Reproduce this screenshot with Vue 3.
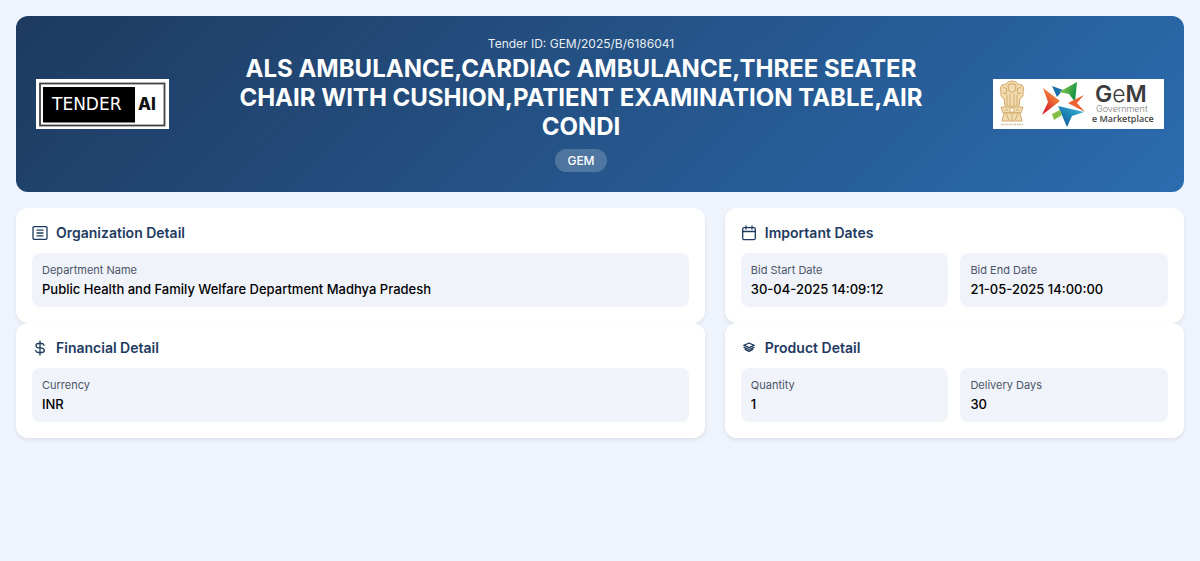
<script setup>
const columns = [
  [
    { title: 'Organization Detail', icon: 'list', items: [['Department Name', 'Public Health and Family Welfare Department Madhya Pradesh']] },
    { title: 'Financial Detail', icon: 'dollar', items: [['Currency', 'INR']] }
  ],
  [
    { title: 'Important Dates', icon: 'calendar', items: [['Bid Start Date', '30-04-2025 14:09:12'], ['Bid End Date', '21-05-2025 14:00:00']] },
    { title: 'Product Detail', icon: 'layers', items: [['Quantity', '1'], ['Delivery Days', '30']] }
  ]
]
</script>

<template>
  <main class="page">
    <header class="banner">
      <svg class="logo" width="133" height="50" viewBox="0 0 133 50" role="img" aria-label="Tender AI">
        <rect x="4" y="4.5" width="124.5" height="42" fill="#fff" stroke="#45403d" stroke-width="1.8" />
        <rect x="7" y="8" width="92" height="35.5" fill="#000" />
        <text x="16" y="31" class="word-tender">TENDER</text>
        <text x="102" y="31" class="word-ai">AI</text>
      </svg>
      <div class="heading">
        <p class="tender-id">Tender ID: GEM/2025/B/6186041</p>
        <h1>ALS AMBULANCE,CARDIAC AMBULANCE,THREE SEATER CHAIR WITH CUSHION,PATIENT EXAMINATION TABLE,AIR CONDI</h1>
        <span class="badge">GEM</span>
      </div>
      <svg class="logo" width="171" height="50" viewBox="0 0 171 50" role="img" aria-label="GeM Government e Marketplace">
        <defs>
          <linearGradient id="flame" x1="0" y1="1" x2="0.6" y2="0">
            <stop offset="0.2" stop-color="#d9232e" />
            <stop offset="1" stop-color="#f79a3c" />
          </linearGradient>
          <linearGradient id="leaf" x1="0" y1="0" x2="1" y2="0.4">
            <stop offset="0" stop-color="#a4cf45" />
            <stop offset="1" stop-color="#159447" />
          </linearGradient>
          <linearGradient id="wave" x1="0" y1="1" x2="1" y2="0">
            <stop offset="0.2" stop-color="#15649f" />
            <stop offset="1" stop-color="#35bfe0" />
          </linearGradient>
        </defs>
        <g fill="#f1dcb2" stroke="#cfa45e" stroke-width="0.9" stroke-linejoin="round">
          <path d="M13 5Q15 2 19 2Q23 2 25 5L29 6Q32 9 30 13L30 17L27 20L26 27H12L11 20L8 17L8 13Q6 9 9 6Z" />
          <path d="M8 28H30L28 34H10Z" />
          <path d="M11 34H27L29 42H9Z" />
          <path d="M15 6Q19 3 23 6L22 12Q19 15 16 12ZM10 8L14 10L13 15L10 14M28 8L24 10L25 15L28 14M14 16V26M17 15V26M21 15V26M24 16V26" fill="none" />
          <circle cx="19" cy="31" r="2.4" fill="#fff6e2" />
          <path d="M12 31H15M23 31H26M13 35L16 41M19 35V42M25 35L22 41" fill="none" />
        </g>
        <path d="M8 45.5H30" stroke="#d9c6a4" stroke-width="1.5" stroke-dasharray="2 0.6" />
        <path d="M50 9L67 22L49 36L55 23Z" fill="url(#flame)" />
        <path d="M59 7L70 11L64 18Z" fill="#1b70ac" />
        <path d="M84 3L82 23L76 15L66 13Z" fill="url(#leaf)" />
        <path d="M91 16L84 24L92 33L75 24Z" fill="#ee6332" />
        <path d="M65 27L91 33L79 37L74 48Z" fill="url(#wave)" />
        <path d="M59 35L67 31L69 36L61 41Z" fill="#86bf49" />
        <text x="102" y="23" class="gem"><tspan>G</tspan><tspan class="thin">e</tspan><tspan>M</tspan></text>
        <text x="103" y="33" class="gov">Government</text>
        <text x="99" y="43" class="market">e Marketplace</text>
      </svg>
    </header>

    <div class="columns">
      <div v-for="(cards, i) in columns" :key="i">
        <section v-for="card in cards" :key="card.title" class="card">
          <h2>
            <svg width="16" height="16" viewBox="0 0 16 16" class="icon" aria-hidden="true">
              <g v-if="card.icon === 'list'">
                <rect x="1" y="1.7" width="14" height="12.6" rx="1" />
                <path d="M5 5.2H11M5 8H11M5 10.8H11" />
              </g>
              <path v-else-if="card.icon === 'dollar'" d="M8 1V15M12 5.3Q11.5 3.5 9.5 3.5H6.5Q4 3.5 4 5.6Q4 7.7 6.5 7.9L9.5 8.2Q12.3 8.5 12.3 10.5Q12.3 12.5 9.5 12.5H6.5Q4 12.5 3.6 10.7" />
              <g v-else-if="card.icon === 'calendar'">
                <rect x="1.7" y="2.7" width="12.6" height="12" rx="1.5" />
                <path d="M1.7 6.5H14.3M5 1V4M11 1V4" />
              </g>
              <path v-else d="M8 3L13.2 5.3L8 7.6L2.8 5.3ZM4.2 7.6V9.3L8 11.3L11.8 9.3V7.6M3 7.5L8 9.5L13 7.5" />
            </svg>
            {{ card.title }}
          </h2>
          <dl>
            <div v-for="item in card.items" :key="item[0]" class="item">
              <dt>{{ item[0] }}</dt>
              <dd>{{ item[1] }}</dd>
            </div>
          </dl>
        </section>
      </div>
    </div>
  </main>
</template>

<style>
body { background: #eff3fb; }
</style>

<style scoped>
.page { padding: 16px; font-family: Inter, "Liberation Sans", sans-serif; color: #000; }
.banner {
  display: flex; align-items: center; justify-content: space-between;
  padding: 20px; border-radius: 12px; margin-bottom: 16px; color: #fff;
  background: linear-gradient(135deg, #1e3a5f 0%, #2b6cb0 100%);
}
.logo { flex: none; display: block; background: #fff; }
.heading { max-width: 700px; text-align: center; }
.tender-id { margin: 0 0 3px; font-size: 12px; line-height: 15px; opacity: 0.9; }
h1 { margin: 0 0 8px; font-size: 24px; line-height: 29px; font-weight: 700; }
.badge {
  display: block; width: fit-content; margin: 0 auto; padding: 4px 12px; border-radius: 12px;
  font-size: 12px; line-height: 15px; font-weight: 500; background: rgba(255, 255, 255, 0.2);
}
.columns { display: grid; grid-template-columns: 3fr 2fr; gap: 20px; }
.card { padding: 16px; border-radius: 12px; background: #fff; box-shadow: 0 2px 4px rgba(0, 0, 0, 0.08); }
h2 {
  display: flex; align-items: center; gap: 8px; margin: 0 0 12px;
  font-size: 14px; line-height: 17px; font-weight: 600; color: #1e3a5f;
}
.icon { fill: none; stroke: currentColor; stroke-width: 1.3; stroke-linecap: round; stroke-linejoin: round; }
dl { display: flex; gap: 12px; margin: 0; }
.item { flex: 1; padding: 10px; border-radius: 8px; background: #f0f3f9; }
dt { margin-bottom: 4px; font-size: 11px; line-height: 14px; color: #4a5568; }
dd { margin: 0; font-size: 13px; line-height: 16px; font-weight: 500; }
.word-tender { font-family: "DejaVu Sans", sans-serif; font-size: 17px; font-weight: 400; fill: #fff; }
.word-ai { font-size: 17px; font-weight: 800; fill: #111; }
.gem { font-size: 23px; font-weight: 600; fill: #3c3c3e; }
.thin { font-weight: 300; }
.gov { font-size: 9px; font-weight: 300; fill: #777; }
.market { font-family: "Open Sans", sans-serif; font-size: 9px; font-weight: 600; fill: #444; }
</style>
